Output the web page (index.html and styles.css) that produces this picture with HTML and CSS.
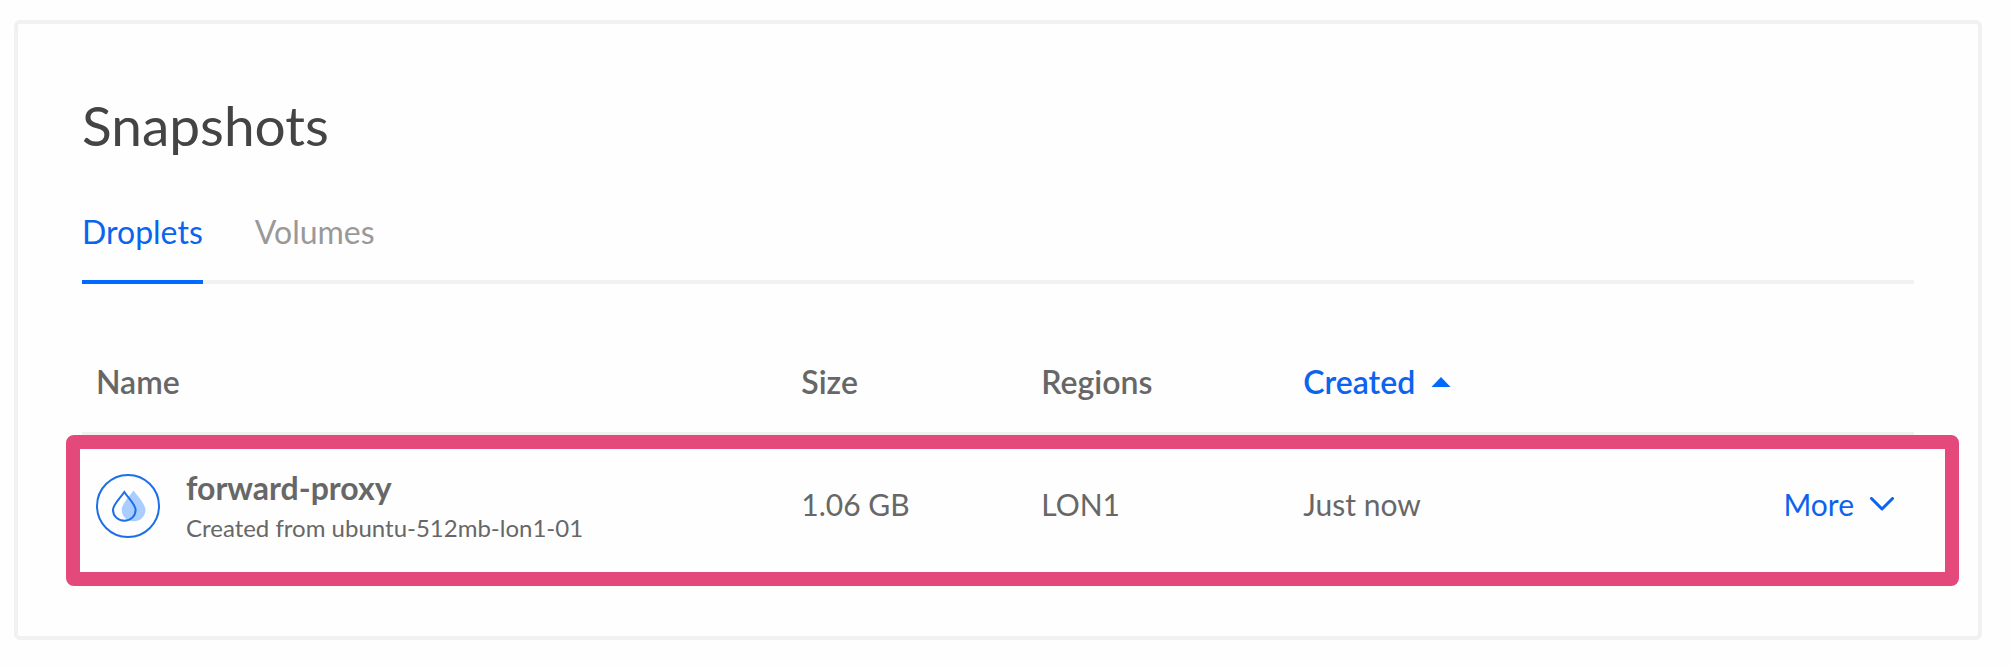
FILE: index.html
```html
<!DOCTYPE html>
<html lang="en">
<head>
<meta charset="utf-8">
<meta name="viewport" content="width=device-width, initial-scale=1">
<title>Snapshots</title>
<link rel="stylesheet" href="styles.css">
</head>
<body>
<main class="card">
  <h1 class="title">Snapshots</h1>
  <nav class="tabs" aria-label="Snapshot types">
    <a class="tab tab-active" href="#droplets" aria-current="page">Droplets</a>
    <a class="tab" href="#volumes">Volumes</a>
  </nav>
  <table class="snapshots">
    <colgroup>
      <col class="col-name"><col class="col-size"><col class="col-regions"><col class="col-created"><col class="col-actions">
    </colgroup>
    <thead>
      <tr>
        <th scope="col">Name</th>
        <th scope="col">Size</th>
        <th scope="col">Regions</th>
        <th scope="col" aria-sort="ascending">
          <button class="sort" type="button">Created
            <svg class="caret" viewBox="0 0 20 10" aria-hidden="true"><path d="M.5 10 10 0l9.500 10z"/></svg>
          </button>
        </th>
        <td></td>
      </tr>
    </thead>
    <tbody>
      <tr class="highlighted">
        <td>
          <div class="snapshot">
            <svg class="droplet" viewBox="0 0 64 64" aria-hidden="true">
              <circle class="droplet-line" cx="32" cy="32" r="31"/>
              <path class="droplet-fill" d="M37.500 16.500C41.500 22 49.500 30 49.500 36A11.900 11.200 0 0 1 25.700 36C25.700 30 33.500 22 37.500 16.500Z"/>
              <path class="droplet-line" d="M28.300 18C31.800 23.500 39.600 30 39.600 36A11.300 10.800 0 0 1 17 36C17 30 24.800 23.500 28.300 18Z"/>
            </svg>
            <div>
              <div class="snapshot-name">forward-proxy</div>
              <div class="snapshot-source">Created from ubuntu-512mb-lon1-01</div>
            </div>
          </div>
        </td>
        <td>1.06 GB</td>
        <td>LON1</td>
        <td>Just now</td>
        <td class="actions">
          <button class="more" type="button">More
            <svg class="chevron" viewBox="0 0 24 14" aria-hidden="true"><path d="M1.500 1.500 12 12 22.500 1.500"/></svg>
          </button>
        </td>
      </tr>
    </tbody>
  </table>
</main>
</body>
</html>
```

FILE: styles.css
```css
* {
  box-sizing: border-box;
}

body {
  margin: 0;
  padding: 20px 30px 28px 14px;
  background: #fefefe;
  color: #676767;
  font: 30px/40px Lato, "Open Sans", sans-serif;
}

.card {
  padding: 64px;
  border: 4px solid #f1f1f1;
  border-radius: 6px;
}

.title {
  margin: 0;
  color: #444;
  font-size: 55px;
  font-weight: 400;
  line-height: 74px;
}

.tabs {
  display: flex;
  gap: 52px;
  margin-top: 50px;
  border-bottom: 4px solid #f1f1f1;
  font-size: 32px;
}

.tab {
  margin-bottom: -4px;
  padding-bottom: 28px;
  border-bottom: 4px solid transparent;
  color: #999;
  text-decoration: none;
}

.tab-active {
  border-color: #0069ff;
  color: #0c63ee;
}

.snapshots {
  width: 100%;
  margin-top: 48px;
  table-layout: fixed;
  border-collapse: separate;
  border-spacing: 0;
}

.col-name { width: 38.5%; }
.col-size { width: 13.1%; }
.col-regions { width: 14.3%; }
.col-created { width: 20%; }

th,
td {
  padding: 0 14px;
  text-align: left;
  vertical-align: middle;
}

th {
  font-size: 32px;
  font-weight: 600;
}

thead th,
thead td {
  height: 104px;
  border-bottom: 4px solid #f1f1f1;
}

tbody td {
  height: 136px;
}

.highlighted {
  position: relative;
}

/* Marker frame drawn over the edges of the row */
.highlighted td:first-child::after {
  content: "";
  position: absolute;
  inset: -1px -45px -14px -16px;
  border: 14px solid #e3497a;
  border-radius: 8px;
  pointer-events: none;
}

.sort,
.more {
  display: inline-flex;
  align-items: center;
  gap: 16px;
  padding: 0;
  border: 0;
  background: none;
  color: #0c63ee;
  font: inherit;
  cursor: pointer;
}

.caret {
  width: 20px;
  height: 10px;
  fill: #0069ff;
}

.snapshot {
  display: flex;
  align-items: center;
  gap: 26px;
  padding-top: 4px;
}

.droplet {
  flex: none;
  width: 64px;
  height: 64px;
}

.droplet-line {
  fill: none;
  stroke: #1b6fe8;
  stroke-width: 2;
}

.droplet-fill {
  fill: #a9cdff;
}

.snapshot-name {
  padding-top: 4px;
  font-size: 32px;
  font-weight: 700;
}

.snapshot-source {
  font-size: 24px;
}

.snapshots .actions {
  padding-right: 20px;
  text-align: right;
}

.chevron {
  width: 24px;
  height: 14px;
  fill: none;
  stroke: #0c63ee;
  stroke-width: 3;
  stroke-linecap: round;
  stroke-linejoin: round;
}
```
